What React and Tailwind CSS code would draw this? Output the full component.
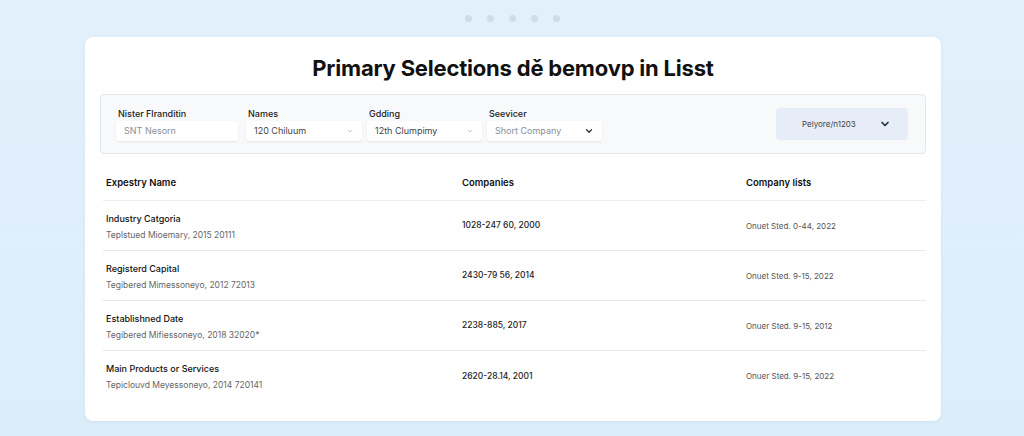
import React from 'react';
import { ChevronDown } from 'lucide-react';

const fields = [
  { label: 'Nister Flranditin', value: 'SNT Nesorn', box: 'w-[122px]', chevron: false, muted: true },
  { label: 'Names', value: '120 Chiluum', box: 'w-[116px] ml-[8px]', chevron: true },
  { label: 'Gdding', value: '12th Clumpimy', box: 'w-[115px] ml-[5px]', chevron: true },
  { label: 'Seevicer', value: 'Short Company', box: 'w-[115px] ml-[5px]', chevron: true, dark: true, muted: true },
];

const rows = [
  { name: 'Industry Catgoria', sub: 'Teplstued Mioemary, 2015 20111', value: '1028-247 60, 2000', list: 'Onuet Sted. 0-44, 2022' },
  { name: 'Registerd Capital', sub: 'Tegibered Mimessoneyo, 2012 72013', value: '2430-79 56, 2014', list: 'Onuet Sted. 9-15, 2022' },
  { name: 'Establishned Date', sub: 'Tegibered Mifiessoneyo, 2018 32020*', value: '2238-885, 2017', list: 'Onuer Sted. 9-15, 2012' },
  { name: 'Main Products or Services', sub: 'Tepiclouvd Meyessoneyo, 2014 720141', value: '2620-28.14, 2001', list: 'Onuer Sted. 9-15, 2022' },
];

const App = () => {
  return (
    <div className="h-[436px] w-full overflow-hidden bg-gradient-to-b from-[#e2f0fb] to-[#dcedfa] font-['Inter',sans-serif]">
      {/* Faint dots on top */}
      <div className="flex justify-center gap-[15px] pt-[15px] h-[37px]">
        {[0, 1, 2, 3, 4].map((i) => (
          <span key={i} className="h-[7px] w-[7px] rounded-full bg-[#cddde9]" />
        ))}
      </div>

      {/* Card */}
      <div className="mx-[85px] w-[856px] h-[384px] rounded-[8px] bg-white shadow-[0_1px_3px_rgba(120,150,180,0.15)] px-[15px] pt-[18px]">
        <h1 className="text-center text-[22px] leading-[26px] font-bold tracking-[-0.2px] text-[#111] mb-[13px]">
          Primary Selections dě bemovp in Lisst
        </h1>

        {/* Filter panel */}
        <div className="flex items-center h-[60px] rounded-[4px] border border-[#e3e8ee] bg-[#f7f9fb] pl-[15px] pr-[17px]">
          <div className="flex">
            {fields.map((f) => (
              <div key={f.label} className={`${f.box} flex flex-col`}>
                <span className="text-[9px] leading-[12px] font-medium text-[#222] pl-[2px] mb-[1px]">{f.label}</span>
                <div className="flex items-center justify-between h-[20px] rounded-[3px] bg-white shadow-[0_1px_2px_rgba(0,0,0,0.08)] pl-[8px] pr-[8px]">
                  <span className={`text-[9px] ${f.muted ? 'text-[#8a8f96]' : 'text-[#444]'}`}>{f.value}</span>
                  {f.chevron && (
                    <ChevronDown
                      className={f.dark ? 'h-[10px] w-[10px] text-[#333]' : 'h-[8px] w-[8px] text-[#aaa]'}
                      strokeWidth={f.dark ? 3 : 2}
                    />
                  )}
                </div>
              </div>
            ))}
          </div>
          <div className="ml-auto flex items-center justify-between h-[32px] w-[132px] rounded-[4px] bg-[#e6ecf8] pl-[26px] pr-[17px]">
            <span className="text-[8px] text-[#444]">Pelyore/n1203</span>
            <ChevronDown className="h-[12px] w-[12px] text-[#2b3340]" strokeWidth={3.5} />
          </div>
        </div>

        {/* Table */}
        <div className="ml-[3px]">
          <div className="grid grid-cols-[356px_284px_1fr] items-end h-[47px] pb-[10px] border-b border-[#eceef1] pl-[3px]">
            <span className="text-[9.5px] font-semibold text-[#111]">Expestry Name</span>
            <span className="text-[9.5px] font-semibold text-[#111]">Companies</span>
            <span className="text-[9.5px] font-semibold text-[#111]">Company lists</span>
          </div>
          {rows.map((r, i) => (
            <div
              key={r.name}
              className={`grid grid-cols-[356px_284px_1fr] items-center h-[50px] pl-[3px] ${i < rows.length - 1 ? 'border-b border-[#e6e8eb]' : ''}`}
            >
              <div className="flex flex-col pt-[1px]">
                <span className="text-[9px] leading-[13px] font-medium text-[#111]">{r.name}</span>
                <span className="text-[8.5px] leading-[12px] mt-[4px] text-[#666]">{r.sub}</span>
              </div>
              <span className="text-[8.5px] font-medium text-[#222]">{r.value}</span>
              <span className="text-[8px] text-[#555]">{r.list}</span>
            </div>
          ))}
        </div>
      </div>
    </div>
  );
};

export default App;
